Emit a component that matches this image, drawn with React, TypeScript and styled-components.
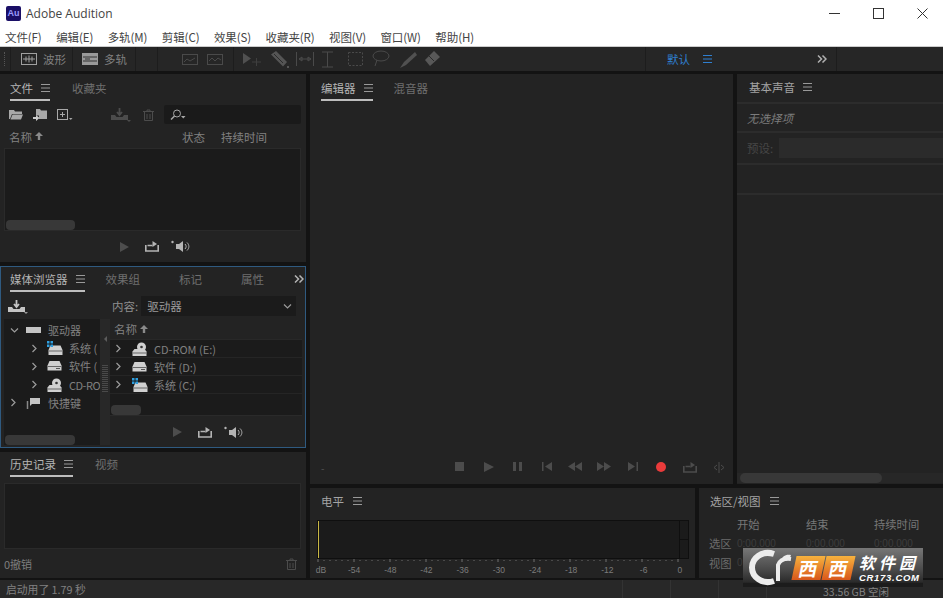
import React from 'react'
import styled, { createGlobalStyle } from 'styled-components'

const GlobalStyle = createGlobalStyle`
  html, body {
    margin: 0;
    padding: 0;
    background: #131313;
    overflow: hidden;
  }
  * { box-sizing: border-box; }
`

const Page = styled.div`
  position: relative;
  width: 943px;
  height: 598px;
  display: flex;
  flex-direction: column;
  font-family: "Noto Sans CJK SC", "Liberation Sans", sans-serif;
  font-size: 12px;
  color: #a0a0a0;
  background: #131313;
  overflow: hidden;
`

const TitleBar = styled.div`
  height: 30px;
  flex: none;
  display: flex;
  align-items: center;
  padding: 0 0 4px 6px;
  background: #fff;
  color: #444;
  font-family: "Open Sans", "Noto Sans", sans-serif;
  font-size: 12px;
`

const AppLogo = styled.div`
  width: 15px;
  height: 15px;
  margin-right: 5px;
  border-radius: 2px;
  background: #1a0f66;
  color: #9c9cff;
  font: bold 9px "Liberation Sans", sans-serif;
  display: flex;
  align-items: center;
  justify-content: center;
`

const WinButtons = styled.div`
  margin-left: auto;
  display: flex;
  align-items: center;
  gap: 33px;
  padding-right: 15px;
  color: #333;
`

const MenuBar = styled.div`
  height: 17px;
  flex: none;
  display: flex;
  align-items: center;
  gap: 14.5px;
  padding: 0 0 2px 5px;
  background: #fff;
  color: #444;
  font-size: 11.5px;
  letter-spacing: -0.1px;
  border-bottom: 1px solid #ccc;
`

const ToolBar = styled.div`
  height: 24px;
  flex: none;
  display: flex;
  align-items: center;
  background: #262626;
  color: #7c7c7c;
`

const ToolSep = styled.div<{ $w: number; $left?: boolean }>`
  width: ${(p) => p.$w}px;
  height: 100%;
  flex: none;
  display: flex;
  align-items: center;
  gap: 6px;
  border-right: 1px solid #1d1d1d;
  border-left: ${(p) => (p.$left ? '1px solid #1d1d1d' : 'none')};
`

const Grip = styled.div`
  width: 1px;
  height: 14px;
  margin-left: 4px;
  border-left: 1px dotted #555;
`

const ModeBtn = styled.div<{ $blue?: boolean }>`
  display: flex;
  align-items: center;
  gap: 6px;
  white-space: nowrap;
  color: ${(p) => (p.$blue ? '#2f7fd0' : '#808080')};
  font-size: 11.5px;
`

const Workspace = styled.div`
  height: 504px;
  flex: none;
  margin-top: 3px;
  display: grid;
  grid-template-columns: 306px 423px 206px;
  grid-template-rows: 410px 90px;
  gap: 4px;
`

const LeftCol = styled.div`
  grid-column: 1;
  grid-row: 1 / 3;
  display: grid;
  grid-template-rows: 188px 182px 126px;
  gap: 4px;
`

const Panel = styled.div<{ $active?: boolean }>`
  position: relative;
  background: #232323;
  display: flex;
  flex-direction: column;
  min-width: 0;
  overflow: hidden;
  border: ${(p) => (p.$active ? '1px solid #2f5a80' : 'none')};
  padding: ${(p) => (p.$active ? '0 3px 2px 3px' : '0 5px 0 4px')};
`

const TabRow = styled.div<{ $tight?: boolean }>`
  height: ${(p) => (p.$tight ? 26 : 28)}px;
  flex: none;
  display: flex;
  align-items: flex-start;
  padding: ${(p) => (p.$tight ? '3px' : '5px')} 0 0 6px;
`

const Tab = styled.div<{ $on?: boolean; $gap?: number }>`
  height: 22px;
  display: flex;
  align-items: center;
  gap: 8px;
  margin-right: ${(p) => p.$gap ?? 22}px;
  padding-bottom: 3px;
  font-size: 11.5px;
  white-space: nowrap;
  color: ${(p) => (p.$on ? '#b4b4b4' : '#6f6f6f')};
  border-bottom: 2px solid ${(p) => (p.$on ? '#bdbdbd' : 'transparent')};
`

const IconRow = styled.div`
  height: 25px;
  flex: none;
  display: flex;
  align-items: center;
  padding-left: 5px;
  color: #a8a8a8;
`

const SearchBox = styled.div`
  width: 137px;
  height: 19px;
  margin-left: auto;
  background: #1a1a1a;
  border-radius: 2px;
  display: flex;
  align-items: center;
  padding-left: 6px;
  color: #a8a8a8;
`

const ColumnHead = styled.div`
  height: 21px;
  flex: none;
  display: flex;
  align-items: center;
  padding: 0 0 2px 5px;
  color: #818181;
  font-size: 11.5px;
`

const Spring = styled.span<{ $w?: number }>`
  flex: ${(p) => (p.$w !== undefined ? 'none' : 1)};
  width: ${(p) => p.$w ?? 0}px;
`

const ListBox = styled.div<{ $h: number; $top?: number }>`
  position: relative;
  height: ${(p) => p.$h}px;
  margin-top: ${(p) => p.$top ?? 0}px;
  flex: none;
  background: #1b1b1b;
  border: 1px solid #2a2a2a;
`

const Thumb = styled.div<{ $w: number; $l?: number }>`
  position: absolute;
  left: ${(p) => p.$l ?? 1}px;
  bottom: 0;
  width: ${(p) => p.$w}px;
  height: 10px;
  background: #383838;
  border-radius: 4px;
`

const Transport = styled.div<{ $drop?: number }>`
  flex: 1;
  display: flex;
  align-items: center;
  justify-content: center;
  gap: 16px;
  padding: ${(p) => p.$drop ?? 0}px 0 0 4px;
  color: #b4b4b4;
`

const SpeakerSlot = styled.span`
  display: flex;
  margin-left: -4px;
`

const DimPlay = styled.span`
  color: #4d4d4d;
  display: flex;
`

const MediaTools = styled.div`
  height: 26px;
  flex: none;
  display: flex;
  align-items: center;
  padding-left: 4px;
  color: #a8a8a8;
`

const SelectLabel = styled.span`
  margin-left: 84px;
  margin-right: 3px;
  color: #8e8e8e;
  font-size: 11.5px;
`

const SelectBox = styled.div`
  width: 155px;
  height: 20px;
  background: #1b1b1b;
  display: flex;
  align-items: center;
  justify-content: space-between;
  padding: 0 4px 0 6px;
  color: #9a9a9a;
  font-size: 11.5px;
`

const Browser = styled.div`
  flex: 1;
  display: grid;
  grid-template-columns: 96px 10px 1fr;
  min-height: 0;
`

const TreePane = styled.div`
  position: relative;
  background: #1b1b1b;
  padding-top: 2px;
  overflow: hidden;
`

const Splitter = styled.div`
  background: #282828;
  display: flex;
  flex-direction: column;
  align-items: center;
  gap: 1px;
  padding-top: 17px;
  color: #5c5c5c;
`

const SplitArrow = styled.div`
  width: 0;
  height: 0;
  margin-bottom: 22px;
  border-top: 3px solid transparent;
  border-bottom: 3px solid transparent;
  border-right: 3px solid #5c5c5c;
`

const GripDot = styled.div`
  width: 6px;
  height: 1px;
  background: #4a4a4a;
`

const FilePane = styled.div`
  display: flex;
  flex-direction: column;
  min-width: 0;
`

const TreeRow = styled.div<{ $depth?: number }>`
  height: 18.2px;
  display: flex;
  align-items: center;
  padding-left: ${(p) => p.$depth ?? 0}px;
  white-space: nowrap;
  font-size: 11px;
  color: #808080;
`

const CutLabel = styled.span`
  letter-spacing: -0.5px;
`

const Chevron = styled.span`
  width: 16px;
  flex: none;
  display: flex;
  color: #9c9c9c;
`

const DriveSlot = styled.span`
  width: 22px;
  flex: none;
  display: flex;
  align-items: center;
  color: #c4c4c4;
`

const FileHead = styled.div`
  height: 20px;
  flex: none;
  display: flex;
  align-items: center;
  padding-left: 4px;
  color: #818181;
  font-size: 11.5px;
`

const FileList = styled.div`
  position: relative;
  height: 77px;
  flex: none;
  background: #1b1b1b;
  border-top: 1px solid #282828;
  border-bottom: 1px solid #2a2a2a;
`

const FileRow = styled.div`
  height: 18px;
  display: flex;
  align-items: center;
  padding-left: 5px;
  font-size: 11px;
  color: #808080;
  border-bottom: 1px solid #252525;
`

const FileChevron = styled(Chevron)`
  width: 17px;
`

const UndoRow = styled.div`
  flex: 1;
  display: flex;
  align-items: center;
  justify-content: space-between;
  padding-right: 4px;
  font-size: 11px;
  color: #7e7e7e;
`

const TrashDim = styled.span`
  color: #4c4c4c;
  display: flex;
`

const EditorBody = styled.div`
  flex: 1;
`

const EditorPanel = styled(Panel)`
  grid-column: 2;
  grid-row: 1;
  background: #232323;
  padding: 0 0 0 5px;
`

const EditorFoot = styled.div`
  height: 30px;
  flex: none;
  display: flex;
  align-items: center;
  justify-content: flex-end;
  margin-bottom: 2px;
  color: #4c4c4c;
`

const Dash = styled.span`
  margin-right: auto;
  margin-left: 6px;
  color: #555;
  font-size: 10px;
`

const TransportBtn = styled.span`
  width: 28.7px;
  display: flex;
  justify-content: center;
`

const RightPanel = styled.div`
  grid-column: 3;
  grid-row: 1;
  background: #232323;
  display: flex;
  flex-direction: column;
`

const RightHead = styled.div`
  height: 30px;
  flex: none;
  display: flex;
  align-items: center;
  gap: 8px;
  padding: 0 0 3px 12px;
  font-size: 11.5px;
  color: #a4a4a4;
  border-bottom: 2px solid #2c2c2c;
`

const NoSelection = styled.div`
  height: 29px;
  flex: none;
  display: flex;
  align-items: center;
  padding-left: 10px;
  font-size: 11.5px;
  font-style: italic;
  color: #7c7c7c;
  border-bottom: 2px solid #2c2c2c;
`

const PresetRow = styled.div`
  height: 32px;
  flex: none;
  display: flex;
  align-items: center;
  padding-left: 10px;
  color: #474747;
  font-size: 11.5px;
  border-bottom: 2px solid #2c2c2c;
`

const PresetInput = styled.div`
  width: 164px;
  height: 20px;
  margin-left: auto;
  background: #2b2b2b;
`

const EmptyRow = styled.div`
  height: 30px;
  flex: none;
  border-bottom: 2px solid #2c2c2c;
`

const RightScroll = styled.div`
  margin-top: auto;
  margin-bottom: 1px;
  height: 10px;
  background: #272727;
  padding-left: 3px;
`

const ScrollBar = styled.div`
  width: 142px;
  height: 10px;
  background: #383838;
  border-radius: 5px;
`

const BottomRow = styled.div`
  grid-column: 2 / 4;
  grid-row: 2;
  display: grid;
  grid-template-columns: 385px 244px;
  gap: 4px;
`

const BottomPanel = styled.div`
  background: #232323;
  display: flex;
  flex-direction: column;
  min-width: 0;
  overflow: hidden;
`

const BottomHead = styled.div`
  height: 26px;
  flex: none;
  display: flex;
  align-items: center;
  gap: 9px;
  padding-left: 11px;
  font-size: 11.5px;
  color: #a4a4a4;
`

const Meter = styled.div`
  position: relative;
  height: 39px;
  flex: none;
  margin: 6px 6px 0 7px;
  width: 372px;
  background: #1b1b1b;
  border: 1px solid #0f0f0f;
`

const MeterPeak = styled.div`
  position: absolute;
  left: 0;
  top: 0;
  bottom: 0;
  width: 1px;
  background: #c9b845;
`

const MeterClip = styled.div`
  position: absolute;
  right: 0;
  top: 0;
  bottom: 0;
  width: 9px;
  border-left: 1px solid #0f0f0f;
`

const MeterClipLine = styled.div`
  position: absolute;
  left: 0;
  right: 0;
  top: 18px;
  height: 1px;
  background: #0f0f0f;
`

const ScaleTicks = styled.svg`
  display: block;
  flex: none;
  margin-left: 7px;
  color: #707070;
`

const ScaleLabels = styled.div`
  display: flex;
  margin-top: 2px;
  font-family: "Liberation Sans", sans-serif;
  font-size: 8.5px;
  line-height: 11px;
  color: #7c7c7c;
`

const ScaleFirst = styled.span`
  width: 26px;
  flex: none;
  padding-right: 4px;
  text-align: center;
`

const ScaleMark = styled.span`
  width: 36.2px;
  flex: none;
  text-align: center;
`

const SelectionGrid = styled.div`
  display: grid;
  grid-template-columns: 28px 69px 68px 1fr;
  grid-auto-rows: 19.5px;
  padding-left: 10px;
  font-size: 11.3px;
  align-items: center;
`

const HeadCell = styled.span`
  color: #777;
  white-space: nowrap;
`

const RowCell = styled.span`
  color: #6c6c6c;
  white-space: nowrap;
`

const TimeCell = styled.span`
  color: #3d3d3d;
  font-family: "Liberation Sans", sans-serif;
  font-size: 10px;
`

const StatusBar = styled.div`
  height: 18px;
  flex: none;
  margin-top: 2px;
  display: flex;
  align-items: center;
  padding-left: 6px;
  background: #282828;
  font-size: 10.8px;
  color: #808080;
`

const StatusCell = styled.div<{ $w: number }>`
  width: ${(p) => p.$w}px;
  height: 100%;
  flex: none;
  border-right: 1px solid #333;
`

const StatusMsg = styled.span`
  width: 570px;
  flex: none;
  padding-bottom: 1px;
`

const FreeSpace = styled.span`
  margin-left: 56px;
  color: #838383;
  font-size: 10.5px;
  padding-top: 5px;
`

const Watermark = styled.div`
  position: absolute;
  left: 743px;
  top: 548px;
  width: 180px;
  height: 39px;
  display: flex;
  align-items: center;
  background: linear-gradient(#777, #4a4a4a 55%, #2a2a2a 88%, #1c1c1c 90%);
  overflow: hidden;
`

const MarkC = styled.div`
  width: 46px;
  height: 39px;
  flex: none;
  margin-left: 4px;
`

const RedBox = styled.div`
  width: 29px;
  height: 24px;
  margin-left: 1px;
  flex: none;
  transform: skewX(-12deg);
  background: linear-gradient(#f6b23e, #d9571a);
  color: #fff;
  font-size: 19px;
  font-weight: 700;
  line-height: 24px;
  text-align: center;
`

const MarkText = styled.div`
  margin-left: 6px;
  display: flex;
  flex-direction: column;
  align-items: flex-start;
  color: #fff;
  font-style: italic;
  font-weight: 700;
`

const MarkBig = styled.span`
  font-size: 16px;
  line-height: 19px;
  letter-spacing: 4px;
`

const MarkSmall = styled.span`
  font-family: "Liberation Sans", sans-serif;
  font-size: 9.5px;
  line-height: 11px;
  letter-spacing: 0.7px;
`

const Svg = ({ w, h, children }: { w: number; h: number; children: React.ReactNode }) => (
  <svg width={w} height={h} viewBox={`0 0 ${w} ${h}`} fill="none" style={{ flex: 'none', display: 'block' }}>
    {children}
  </svg>
)

const Burger = ({ color = '#999' }: { color?: string }) => (
  <Svg w={9} h={8}>
    <path d="M0 .5h9M0 4h9M0 7.5h9" stroke={color} />
  </Svg>
)

const Up = () => (
  <Svg w={8} h={9}>
    <path d="M4 0 8 4H5.2v4H2.8V4H0z" fill="#8a8a8a" />
  </Svg>
)

const Right = () => (
  <Svg w={7} h={9}>
    <path d="m1.5 1 3.5 3.5-3.5 3.5" stroke="currentColor" strokeWidth="1.2" />
  </Svg>
)

const Down = () => (
  <Svg w={9} h={7}>
    <path d="m1 1.5 3.5 3.5 3.500-3.500" stroke="currentColor" strokeWidth="1.2" />
  </Svg>
)

const Play = () => (
  <Svg w={10} h={10}>
    <path d="M1 0 10 5 1 10z" fill="currentColor" />
  </Svg>
)

const Loop = () => (
  <Svg w={14} h={11}>
    <path d="M.8 4v6h12.400V4M2.500 4.500h5" stroke="currentColor" strokeWidth="1.6" />
    <path d="M7.500 0 12 3 7.500 6z" fill="currentColor" />
  </Svg>
)

const Speaker = () => (
  <Svg w={20} h={13}>
    <circle cx="1.500" cy="2" r="1.200" fill="currentColor" />
    <path d="M5 4h3l4-3v11L8 9H5z" fill="currentColor" />
    <path d="M14 4c1.500 1.500 1.500 3.500 0 5M16 2.500c2.500 2.500 2.500 5.500 0 8" stroke="currentColor" />
  </Svg>
)

const Folder = () => (
  <Svg w={14} h={11}>
    <path d="M0 1h5l1 1.500h7V5H3L1 10H0z" fill="currentColor" />
    <path d="M3.500 5.500H14l-2 5H1.500z" fill="currentColor" />
  </Svg>
)

const FolderImport = () => (
  <Svg w={15} h={13}>
    <path d="M3 1h4l1 1.500h6V11H6V7.500H3z" fill="currentColor" />
    <path d="M0 9h3V7l3.500 3L3 13v-2H0z" fill="#ccc" />
  </Svg>
)

const NewBox = () => (
  <Svg w={16} h={12}>
    <rect x=".5" y=".5" width="10" height="10" stroke="currentColor" />
    <path d="M5.500 3v5M3 5.500h5" stroke="currentColor" />
    <path d="m12 9 3.500 0-1.750 2z" fill="currentColor" />
  </Svg>
)

const Inbox = ({ dim }: { dim?: boolean }) => (
  <Svg w={20} h={15}>
    <path d="M0 8h4l1.500 2h6L13 8h4v5H0z" fill={dim ? '#4c4c4c' : '#c4c4c4'} />
    <path d="M8.500 1v6M6 5l2.500 3L11 5" stroke={dim ? '#4c4c4c' : '#c4c4c4'} strokeWidth="1.800" />
    <path d="m16 13 4 0-2 2z" fill={dim ? '#4c4c4c' : '#999'} />
  </Svg>
)

const Trash = () => (
  <Svg w={11} h={12}>
    <path d="M0 2.500h11M4 2.500V1h3v1.500M1.500 3v8.500h8V3M4 5v5M7 5v5" stroke="currentColor" />
  </Svg>
)

const Magnifier = () => (
  <Svg w={16} h={11}>
    <circle cx="7" cy="4.500" r="3.500" stroke="currentColor" />
    <path d="M4.500 7 1 10.500" stroke="currentColor" strokeWidth="1.500" />
    <path d="m11 7 4.500 0-2.250 2.500z" fill="currentColor" />
  </Svg>
)

const Drive = () => (
  <Svg w={15} h={10}>
    <path d="M2.500 0h10l2 4.500v5H.5v-5z" fill="#d0d0d0" />
    <path d="M1 5.500h13" stroke="#666" />
    <path d="M9 7.500h4" stroke="#555" />
  </Svg>
)

const SystemDrive = () => (
  <Svg w={16} h={14}>
    <path d="M3.500 4.500h10l2 4.500v5h-14V9z" fill="#d0d0d0" />
    <path d="M2 10h13" stroke="#666" />
    <rect x="0" y="0" width="2.500" height="2.500" fill="#2f9fe0" />
    <rect x="3.500" y="0" width="2.500" height="2.500" fill="#2f9fe0" />
    <rect x="0" y="3.500" width="2.500" height="2.500" fill="#2f9fe0" />
    <rect x="3.500" y="3.500" width="2.500" height="2.500" fill="#2f9fe0" />
  </Svg>
)

const CdDrive = () => (
  <Svg w={15} h={14}>
    <path d="M2.500 7h10l2 2.500V14H.5V9.500z" fill="#d0d0d0" />
    <circle cx="9.500" cy="5" r="4.500" fill="#d0d0d0" />
    <circle cx="9.500" cy="5" r="1.300" fill="#333" />
    <path d="M1 11h13" stroke="#666" />
  </Svg>
)

const Flag = () => (
  <Svg w={14} h={12}>
    <path d="M4 1h10v6H6L4 9z" fill="#c4c4c4" />
    <path d="M1.500 4v8" stroke="#888" strokeWidth="1.500" />
  </Svg>
)

const WaveMode = () => (
  <Svg w={16} h={12}>
    <rect x=".5" y=".5" width="15" height="11" stroke="#a0a0a0" />
    <path d="M2 6h12M5 3.500v5M8 2.500v7M11 3.500v5" stroke="#a0a0a0" />
  </Svg>
)

const MultiMode = () => (
  <Svg w={16} h={12}>
    <rect width="16" height="12" fill="#9a9a9a" />
    <path d="M1 4h14M1 8h14" stroke="#333" />
    <path d="M3 6h5" stroke="#333" />
  </Svg>
)

// starts at x=157 on the page, so the coordinates are page x minus 157
const ToolIcons = () => (
  <Svg w={288} h={24}>
    <g stroke="#4a4a4a">
      <rect x="24.500" y="7.500" width="15" height="10" />
      <rect x="49.500" y="7.500" width="15" height="10" />
      <path d="M26 15l3-3 3 2 5-3M51 14l3-3 3 3 3-3 3 2" />
      <path d="M75.500 0v24" stroke="#1d1d1d" />
      <path d="M138.500 5v14M155.500 5v14M141 12h12M141 12l3-2v4zM153 12l-3-2v4z" />
      <path d="M164 5h11M164 20h11M169.500 5v15" />
      <rect x="190.500" y="5.500" width="14" height="13" strokeDasharray="2 1.500" />
      <ellipse cx="223" cy="9" rx="8" ry="5" />
      <path d="M219 13l-2 6" />
    </g>
    <path d="M85 6v11l8-5.500z" fill="#505050" />
    <path d="M94 15h9M98.500 11v8" stroke="#3f3f3f" />
    <path d="m118 4 11 11-4 4.500-12-12z" fill="#555" />
    <path d="m116 7 9 9" stroke="#2b2b2b" />
    <circle cx="130" cy="20" r="1" fill="#666" />
    <path d="M257 5 246 15l-4 6 6-3L259 8z" fill="#515151" />
    <path d="m276 4-9 9 5 6 10-9z" fill="#585858" />
    <path d="m271 9 5 5" stroke="#2a2a2a" />
  </Svg>
)

const DoubleChevron = ({ color }: { color: string }) => (
  <Svg w={10} h={8}>
    <path d="m1 .5 3.500 3.500L1 7.500M5.500 .5 9 4 5.500 7.500" stroke={color} strokeWidth="1.500" />
  </Svg>
)

const TOOLS = [
  <path key="stop" d="M2 0h9v9H2z" fill="currentColor" />,
  <path key="play" d="M2 0l10 5-10 5z" fill="currentColor" />,
  <path key="pause" d="M2 0h3v9H2zM8 0h3v9H8z" fill="currentColor" />,
  <path key="prev" d="M2 0h1.500v9H2zM12 0v9L5 4.500z" fill="currentColor" />,
  <path key="rew" d="M7 0v9L0 4.500zM14 0v9L7 4.500z" fill="currentColor" />,
  <path key="ff" d="M0 0v9l7-4.500zM7 0v9l7-4.500z" fill="currentColor" />,
  <path key="next" d="M12 0h-1.500v9H12zM2 0v9l7-4.500z" fill="currentColor" />,
]

const MenuItems = ['文件(F)', '编辑(E)', '多轨(M)', '剪辑(C)', '效果(S)', '收藏夹(R)', '视图(V)', '窗口(W)', '帮助(H)']
const ScaleMarks = ['-54', '-48', '-42', '-36', '-30', '-24', '-18', '-12', '-6', '0']

function LevelTicks() {
  const ticks = []
  for (let i = 0; i < 61; i++) {
    const x = 1 + i * 6
    ticks.push(<path key={i} d={`M${x} ${i % 6 === 0 ? 0 : 1}v${i % 6 === 0 ? 3 : 1}`} stroke="currentColor" />)
  }
  return (
    <ScaleTicks width="370" height="4" viewBox="0 0 370 4">
      {ticks}
    </ScaleTicks>
  )
}

function TransportBar({ drop }: { drop?: number }) {
  return (
    <Transport $drop={drop}>
      <DimPlay>
        <Play />
      </DimPlay>
      <Loop />
      <SpeakerSlot>
        <Speaker />
      </SpeakerSlot>
    </Transport>
  )
}

export default function App() {
  return (
    <Page>
      <GlobalStyle />
      <TitleBar>
        <AppLogo>Au</AppLogo>
        Adobe Audition
        <WinButtons>
          <Svg w={11} h={11}>
            <path d="M0 5.500h11" stroke="#333" />
          </Svg>
          <Svg w={11} h={11}>
            <rect x=".5" y=".5" width="10" height="10" stroke="#333" />
          </Svg>
          <Svg w={11} h={11}>
            <path d="m.5 .5 10 10M10.500 .5l-10 10" stroke="#333" />
          </Svg>
        </WinButtons>
      </TitleBar>
      <MenuBar>
        {MenuItems.map((m) => (
          <span key={m}>{m}</span>
        ))}
      </MenuBar>
      <ToolBar>
        <ToolSep $w={11}>
          <Grip />
        </ToolSep>
        <ToolSep $w={62}>
          <Spring $w={4} />
          <ModeBtn>
            <WaveMode />
            波形
          </ModeBtn>
        </ToolSep>
        <ToolSep $w={63}>
          <Spring $w={3} />
          <ModeBtn>
            <MultiMode />
            多轨
          </ModeBtn>
        </ToolSep>
        <ToolSep $w={22} />
        <ToolIcons />
        <Spring />
        <ToolSep $w={192} $left>
          <Spring $w={15} />
          <ModeBtn $blue>默认</ModeBtn>
          <Spring $w={1} />
          <Burger color="#2f7fd0" />
          <Spring $w={93} />
          <DoubleChevron color="#b0b0b0" />
        </ToolSep>
        <Spring $w={106} />
      </ToolBar>
      <Workspace>
        <LeftCol>
          <Panel>
            <TabRow>
              <Tab $on>
                文件
                <Burger />
              </Tab>
              <Tab>收藏夹</Tab>
            </TabRow>
            <IconRow>
              <Folder />
              <Spring $w={10} />
              <FolderImport />
              <Spring $w={9} />
              <NewBox />
              <Spring $w={38} />
              <Inbox dim />
              <Spring $w={12} />
              <TrashDim>
                <Trash />
              </TrashDim>
              <SearchBox>
                <Magnifier />
              </SearchBox>
            </IconRow>
            <ColumnHead>
              名称
              <Spring $w={3} />
              <Up />
              <Spring $w={139} />
              状态
              <Spring $w={16} />
              持续时间
            </ColumnHead>
            <ListBox $h={83}>
              <Thumb $w={69} />
            </ListBox>
            <TransportBar />
          </Panel>
          <Panel $active>
            <TabRow $tight>
              <Tab $on $gap={21}>
                媒体浏览器
                <Burger />
              </Tab>
              <Tab $gap={39}>效果组</Tab>
              <Tab $gap={39}>标记</Tab>
              <Tab $gap={30}>属性</Tab>
              <Tab $gap={0}>
                <DoubleChevron color="#b4b4b4" />
              </Tab>
            </TabRow>
            <MediaTools>
              <Inbox />
              <SelectLabel>内容:</SelectLabel>
              <SelectBox>
                驱动器
                <Down />
              </SelectBox>
            </MediaTools>
            <Browser>
              <TreePane>
                <TreeRow $depth={6}>
                  <Chevron>
                    <Down />
                  </Chevron>
                  <DriveSlot>
                    <Svg w={15} h={6}>
                      <rect width="15" height="6" fill="#c4c4c4" />
                    </Svg>
                  </DriveSlot>
                  驱动器
                </TreeRow>
                <TreeRow $depth={27}>
                  <Chevron>
                    <Right />
                  </Chevron>
                  <DriveSlot>
                    <SystemDrive />
                  </DriveSlot>
                  系统 (
                </TreeRow>
                <TreeRow $depth={27}>
                  <Chevron>
                    <Right />
                  </Chevron>
                  <DriveSlot>
                    <Drive />
                  </DriveSlot>
                  软件 (
                </TreeRow>
                <TreeRow $depth={27}>
                  <Chevron>
                    <Right />
                  </Chevron>
                  <DriveSlot>
                    <CdDrive />
                  </DriveSlot>
                  <CutLabel>CD-RO</CutLabel>
                </TreeRow>
                <TreeRow $depth={6}>
                  <Chevron>
                    <Right />
                  </Chevron>
                  <DriveSlot>
                    <Flag />
                  </DriveSlot>
                  快捷键
                </TreeRow>
                <Thumb $w={70} />
              </TreePane>
              <Splitter>
                <SplitArrow />
                {Array.from({ length: 14 }, (_, i) => (
                  <GripDot key={i} />
                ))}
              </Splitter>
              <FilePane>
                <FileHead>
                  名称
                  <Spring $w={3} />
                  <Up />
                </FileHead>
                <FileList>
                  <FileRow>
                    <FileChevron>
                      <Right />
                    </FileChevron>
                    <DriveSlot>
                      <CdDrive />
                    </DriveSlot>
                    CD-ROM (E:)
                  </FileRow>
                  <FileRow>
                    <FileChevron>
                      <Right />
                    </FileChevron>
                    <DriveSlot>
                      <Drive />
                    </DriveSlot>
                    软件 (D:)
                  </FileRow>
                  <FileRow>
                    <FileChevron>
                      <Right />
                    </FileChevron>
                    <DriveSlot>
                      <SystemDrive />
                    </DriveSlot>
                    系统 (C:)
                  </FileRow>
                  <Thumb $w={30} />
                </FileList>
                <TransportBar drop={3} />
              </FilePane>
            </Browser>
          </Panel>
          <Panel>
            <TabRow $tight>
              <Tab $on>
                历史记录
                <Burger />
              </Tab>
              <Tab>视频</Tab>
            </TabRow>
            <ListBox $h={66} $top={5} />
            <UndoRow>
              0撤销
              <TrashDim>
                <Trash />
              </TrashDim>
            </UndoRow>
          </Panel>
        </LeftCol>
        <EditorPanel>
          <TabRow>
            <Tab $on $gap={21}>
              编辑器
              <Burger />
            </Tab>
            <Tab>混音器</Tab>
          </TabRow>
          <EditorBody />
          <EditorFoot>
            <Dash>-</Dash>
            {TOOLS.map((t) => (
              <TransportBtn key={t.key}>
                <svg width="14" height="10" viewBox="0 0 14 10">
                  {t}
                </svg>
              </TransportBtn>
            ))}
            <TransportBtn>
              <Svg w={10} h={10}>
                <circle cx="5" cy="5" r="5" fill="#ea3b3b" />
              </Svg>
            </TransportBtn>
            <TransportBtn>
              <Loop />
            </TransportBtn>
            <TransportBtn>
              <Svg w={14} h={11}>
                <path d="M7 0v11M5 3 2 5.500 5 8M9 3l3 2.500L9 8" stroke="currentColor" />
              </Svg>
            </TransportBtn>
          </EditorFoot>
        </EditorPanel>
        <RightPanel>
          <RightHead>
            基本声音
            <Burger />
          </RightHead>
          <NoSelection>无选择项</NoSelection>
          <PresetRow>
            预设:
            <PresetInput />
          </PresetRow>
          <EmptyRow />
          <RightScroll>
            <ScrollBar />
          </RightScroll>
        </RightPanel>
        <BottomRow>
          <BottomPanel>
            <BottomHead>
              电平
              <Burger />
            </BottomHead>
            <Meter>
              <MeterPeak />
              <MeterClip>
                <MeterClipLine />
              </MeterClip>
            </Meter>
            <LevelTicks />
            <ScaleLabels>
              <ScaleFirst>dB</ScaleFirst>
              {ScaleMarks.map((m) => (
                <ScaleMark key={m}>{m}</ScaleMark>
              ))}
            </ScaleLabels>
          </BottomPanel>
          <BottomPanel>
            <BottomHead>
              选区/视图
              <Burger />
            </BottomHead>
            <SelectionGrid>
              <span />
              <HeadCell>开始</HeadCell>
              <HeadCell>结束</HeadCell>
              <HeadCell>持续时间</HeadCell>
              <RowCell>选区</RowCell>
              <TimeCell>0:00.000</TimeCell>
              <TimeCell>0:00.000</TimeCell>
              <TimeCell>0:00.000</TimeCell>
              <RowCell>视图</RowCell>
              <TimeCell>0:00.000</TimeCell>
            </SelectionGrid>
          </BottomPanel>
        </BottomRow>
      </Workspace>
      <StatusBar>
        <StatusMsg>启动用了 1.79 秒</StatusMsg>
        <StatusCell $w={47} />
        <StatusCell $w={48} />
        <StatusCell $w={48} />
        <StatusCell $w={48} />
        <FreeSpace>33.56 GB 空闲</FreeSpace>
      </StatusBar>
      <Watermark>
        <MarkC>
          <svg width="46" height="39" viewBox="0 0 46 39" fill="none">
            <path d="M27 6C15 2 5 10 5 19.500S15 37 27 33" stroke="#ececec" strokeWidth="6" />
            <path d="M31 33V17c2-5 6-7 13-6" stroke="#ececec" strokeWidth="4" />
            <path d="M34 13c1-5 5-7 10-6-1 4-5 7-10 6z" fill="#ececec" />
          </svg>
        </MarkC>
        <RedBox>西</RedBox>
        <RedBox>西</RedBox>
        <MarkText>
          <MarkBig>软件园</MarkBig>
          <MarkSmall>CR173.COM</MarkSmall>
        </MarkText>
      </Watermark>
    </Page>
  )
}
